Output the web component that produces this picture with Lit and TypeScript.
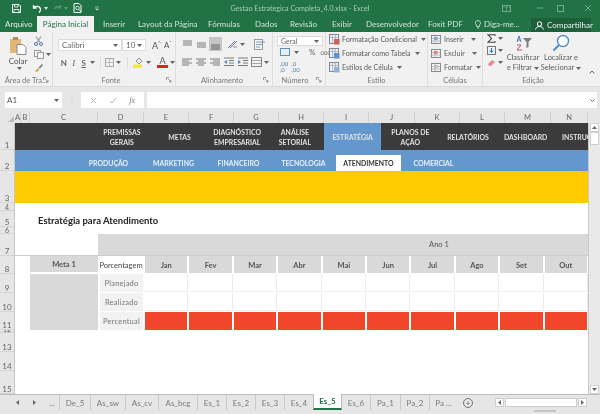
import { LitElement, css, html, svg } from 'lit';
import { customElement } from 'lit/decorators.js';

const caret = html`<svg class="caret" width="5" height="3" viewBox="0 0 5 3"><path d="M0 0h5L2.5 3z" fill="#666"/></svg>`;
const icon = (w: number, h: number, body: unknown) =>
  html`<svg width=${w} height=${h} viewBox="0 0 ${w} ${h}" fill="none">${body}</svg>`;

const lines = (ys: number[], xs: [number, number][], color = '#7a7a7a') =>
  icon(12, 12, ys.map((y, i) => svg`<path d="M${xs[i][0]} ${y}H${xs[i][1]}" stroke=${color} stroke-width="1"/>`));

const launcher = html`<svg class="launch" width="6" height="6" viewBox="0 0 6 6"><path d="M.5 3V.5H3M2 2l3 3M5 3v2H3" stroke="#777" stroke-width=".7" fill="none"/></svg>`;

const styleIcon = (accent: string) =>
  icon(11, 11, svg`<rect x=".5" y=".5" width="9" height="9" fill="#eef2f6" stroke="#7d8a96"/><path d="M.5 3.5h9M3.5.5v9M6.5.5v9" stroke="#9aa6b0" stroke-width=".7"/><rect x="5" y="5" width="5.5" height="5.5" fill=${accent}/>`);

const cellIcon = (accent: string) =>
  icon(11, 11, svg`<rect x=".5" y="1.5" width="9" height="8" fill="#f2f2f2" stroke="#8a8a8a"/><path d="M.5 4.5h9M.5 7h9M4 1.5v8" stroke="#a8a8a8" stroke-width=".7"/><rect x="3" y="3" width="3.5" height="3" fill=${accent}/>`);

const topNav = [
  ['PREMISSAS', 'GERAIS'], ['METAS'], ['DIAGNÓSTICO', 'EMPRESARIAL'], ['ANÁLISE', 'SETORIAL'],
  ['ESTRATÉGIA'], ['PLANOS DE', 'AÇÃO'], ['RELATÓRIOS'], ['DASHBOARD'], ['INSTRUÇÕES'],
];
const subNav = ['PRODUÇÃO', 'MARKETING', 'FINANCEIRO', 'TECNOLOGIA', 'ATENDIMENTO', 'COMERCIAL'];
const months = ['Jan', 'Fev', 'Mar', 'Abr', 'Mai', 'Jun', 'Jul', 'Ago', 'Set', 'Out'];
const colWidths = [6, 9, 68, 46, 45, 45, 45, 45, 45, 46, 45, 45, 46, 37];
const colNames = ['A', 'B', 'C', 'D', 'E', 'F', 'G', 'H', 'I', 'J', 'K', 'L', 'M', 'N'];
const rowLabels: [string, number][] = [
  ['1', 27], ['2', 21], ['3', 32], ['4', 8], ['5', 16], ['6', 7], ['7', 22], ['8', 18], ['9', 19],
  ['10', 19], ['11', 18], ['12', 3], ['13', 19], ['14', 19], ['15', 23],
];
// tab text boxes sit 16px apart, widths read off the reference
const ribbonTabs: [string, number][] = [
  ['Inserir', 19], ['Layout da Página', 54], ['Fórmulas', 31], ['Dados', 19],
  ['Revisão', 26], ['Exibir', 18], ['Desenvolvedor', 46], ['Foxit PDF', 30],
];
const sheetsLeft: [string, number][] = [
  ['De_5', 31], ['As_sw', 35], ['As_cv', 33], ['As_bcg', 39], ['Es_1', 29], ['Es_2', 29], ['Es_3', 29], ['Es_4', 29],
];
const sheetsRight: [string, number][] = [['Es_6', 28], ['Pa_1', 30], ['Pa_2', 29], ['Pa ...', 28]];

@customElement('app-root')
export class AppRoot extends LitElement {
  static styles = css`
    :host {
      display: block;
      width: 600px;
      height: 414px;
      overflow: hidden;
      background: #e6e6e6;
      font-family: Lato, 'Liberation Sans', sans-serif;
      font-size: 8px;
      color: #555;
      filter: blur(0.3px);
    }
    svg { display: block; flex: none; }
    .caret { margin-left: 2px; }

    /* title bar */
    .title {
      height: 16px;
      background: #217346;
      display: grid;
      grid-template-columns: 1fr 160px 1fr;
      align-items: center;
      color: #a5cdb6;
      font-size: 7.1px;
    }
    .qat { display: flex; align-items: center; gap: 5px; padding-left: 12px; }
    .title-text { text-align: center; white-space: nowrap; }
    .win { display: flex; justify-content: flex-end; align-items: center; padding-right: 9px; }
    .win svg:nth-child(1) { margin-right: 26px; }
    .win svg:nth-child(2) { margin-right: 13.5px; }
    .win svg:nth-child(3) { margin-right: 21.5px; }

    /* tabs */
    .tabs {
      height: 16px;
      background: #217346;
      display: flex;
      align-items: stretch;
      color: #cfe3d7;
      white-space: nowrap;
    }
    .tab { margin-left: 16px; line-height: 16px; text-align: center; flex: none; }
    .tab.file { margin-left: 5px; width: 24px; color: #e0eee6; }
    .tab.on {
      width: 57px;
      margin-left: 8px;
      background: #f1f1f1;
      color: #217346;
      line-height: 17px;
    }
    .tab.after { margin-left: 9px; }
    .tell { display: flex; align-items: center; gap: 3px; margin-left: 17px; width: 42px; flex: none; }
    .share {
      display: flex;
      align-items: center;
      gap: 3px;
      margin: 2px 0 0 14px;
      padding: 0 4px;
      width: 60px;
      box-sizing: border-box;
      background: #1d5f3a;
      color: #e8f2ec;
      flex: none;
    }

    /* ribbon */
    .ribbon {
      height: 54px;
      background: #f1f1f1;
      display: flex;
      border-bottom: 1px solid #dcdcdc;
    }
    .group {
      display: flex;
      flex-direction: column;
      border-right: 1px solid #dedede;
      box-sizing: border-box;
      flex: none;
    }
    .body { flex: 1; display: flex; min-height: 0; }
    .label {
      height: 10px;
      line-height: 9px;
      text-align: center;
      font-size: 7.5px;
      color: #777;
      position: relative;
      white-space: nowrap;
    }
    .launch { position: absolute; right: 3px; top: 1px; }
    .clip { width: 53px; }
    .clip .body { padding: 4px 0 0 9px; gap: 7px; }
    .paste { display: flex; flex-direction: column; align-items: center; width: 18px; color: #555; gap: 1px; line-height: 10px; }
    .clip-tools { display: flex; flex-direction: column; gap: 4px; }

    .font { width: 123px; }
    .font .body { flex-direction: column; padding: 7px 0 0 5px; gap: 6px; }
    .row { display: flex; align-items: center; }
    .combo {
      height: 12px;
      background: #fff;
      border: 1px solid #dcdcdc;
      box-sizing: border-box;
      display: flex;
      align-items: center;
      justify-content: space-between;
      padding: 0 3px;
      color: #666;
    }
    .bold { font-weight: 700; }
    .fbtn { width: 13px; text-align: center; color: #666; }

    .align { width: 97px; }
    .align .body { padding: 5px 0 0 4px; display: grid; grid-template-columns: repeat(5, 14px) 20px; grid-auto-rows: 14px; gap: 4px 0; justify-items: center; align-items: center; }
    .sel { background: #c6c6c6; width: 13px; height: 14px; display: flex; align-items: center; justify-content: center; }

    .num { width: 53px; }
    .num .body { flex-direction: column; padding: 4px 0 0 4px; }
    .num .combo { height: 10px; margin-bottom: 2px; }
    .num-tools { padding-left: 3px; gap: 2px; height: 8px; }
    .num-dec { padding-left: 3px; gap: 3px; margin-top: 5px; font-size: 6px; color: #4c7fb0; line-height: 6px; }

    .styles { width: 102px; }
    .styles .body, .cells .body { flex-direction: column; padding: 2px 0 0 3px; gap: 3px; white-space: nowrap; font-size: 7.1px; }
    .line { display: flex; align-items: center; gap: 2px; height: 11px; color: #5c5c5c; }
    .cells { width: 55px; }

    .edit { width: 117px; border-right: none; }
    .edit .body { padding: 2px 0 0 4px; }
    .sum { display: flex; flex-direction: column; gap: 3px; width: 19px; }
    .big { display: flex; flex-direction: column; align-items: center; width: 34px; flex: none; font-size: 7.4px; line-height: 10px; color: #5c5c5c; text-align: center; white-space: nowrap; }
    .big svg { margin-bottom: 1px; }
    .big .caret { margin-bottom: 0; }
    .big .txt { display: flex; flex-direction: column; align-items: center; }
    .big .t2 { display: flex; align-items: center; }
    .big.find { margin-left: 4px; }
    .collapse { flex: 1; display: flex; align-items: flex-end; justify-content: flex-end; padding: 0 5px 2px 0; }
    .edit .label { width: 100px; }

    /* formula bar */
    .fbar {
      height: 25px;
      box-sizing: border-box;
      padding: 5px 3px 4px 5px;
      display: flex;
      align-items: stretch;
    }
    .name {
      width: 57px;
      box-sizing: border-box;
      background: #fff;
      padding: 0 3px 0 2px;
      display: flex;
      align-items: center;
      justify-content: space-between;
      color: #555;
    }
    .dots { width: 19px; color: #bbb; text-align: center; line-height: 14px; }
    .fx { width: 63px; background: #fff; display: flex; align-items: center; justify-content: space-around; padding: 0 3px; box-sizing: border-box; color: #777; font-style: italic; font-family: 'Liberation Serif', serif; }
    .finput { flex: 1; background: #fff; margin-left: 3px; display: flex; align-items: center; justify-content: flex-end; padding-right: 2px; }

    /* column headers */
    .cols { height: 11px; display: flex; background: #e6e6e6; color: #666; font-size: 7.5px; line-height: 11px; }
    .corner { width: 15px; flex: none; position: relative; }
    .corner::after {
      content: '';
      position: absolute;
      right: 1px;
      bottom: 1px;
      border-style: solid;
      border-width: 0 0 6px 6px;
      border-color: transparent transparent #bbb transparent;
    }
    .col { text-align: center; border-right: 1px solid #d0d0d0; box-sizing: border-box; flex: none; }
    .col-fill { flex: 1; }

    /* sheet */
    .sheet { height: 271px; display: flex; overflow: hidden; }
    .rownums { width: 15px; flex: none; display: flex; flex-direction: column; color: #666; font-size: 8px; border-right: 1px solid #c6c6c6; box-sizing: border-box; overflow: hidden; }
    .rownum { flex: none; box-sizing: border-box; display: flex; align-items: flex-end; justify-content: center; line-height: 8px; border-bottom: 1px solid #d4d4d4; overflow: hidden; }
    .rownum.tiny { font-size: 7px; line-height: 6px; }
    .canvas { width: 573px; flex: none; background: #fff; overflow: hidden; }
    .nav-dark {
      height: 27px;
      box-sizing: border-box;
      background: #3b3b3b;
      display: grid;
      grid-template-columns: 78px repeat(9, 57.7px);
      color: #e2e2e2;
      font-weight: 700;
      font-size: 6.9px;
      line-height: 10px;
      text-align: center;
      white-space: nowrap;
    }
    .nav-dark > div { display: flex; flex-direction: column; justify-content: center; align-items: center; padding-top: 1px; }
    .nav-dark .on { background: #6397cd; }
    .nav-blue {
      height: 21px;
      background: #6397cd;
      display: grid;
      grid-template-columns: 61px repeat(6, 65px);
      align-items: end;
      color: #e8f1fa;
      font-weight: 700;
      font-size: 6.9px;
      text-align: center;
    }
    .nav-blue > div { height: 16px; display: flex; align-items: center; justify-content: center; }
    .nav-blue .on { background: #fff; color: #333; }
    .band { height: 32px; background: #ffcb00; }
    .heading { height: 31px; padding: 10px 0 0 23px; box-sizing: border-box; color: #222; font-weight: 700; font-size: 9.5px; line-height: 16px; }
    .year {
      height: 21px;
      margin-left: 83px;
      padding-left: 192px;
      background: #d9d9d9;
      text-align: center;
      line-height: 21px;
      color: #555;
      font-size: 7.5px;
    }
    .rule { height: 1px; background: #cfcfcf; }
    .table {
      display: grid;
      grid-template-columns: 15px 68px 46px repeat(10, 44.4px);
      grid-template-rows: 17px 18px 18px 18px;
      gap: 1px 0;
      font-size: 7.5px;
      color: #666;
    }
    .meta-head, .month { background: #d9d9d9; font-weight: 700; color: #555; display: flex; align-items: center; justify-content: center; box-sizing: border-box; }
    .meta-head { grid-column: 2; border-bottom: 1px solid #fff; }
    .month { border-right: 1px solid #fff; border-left: 1px solid #fff; padding-top: 2px; }
    .pct { display: flex; align-items: center; justify-content: center; color: #444; padding-top: 2px; }
    .meta-body { grid-column: 2; grid-row: 2 / span 3; background: #d9d9d9; }
    .side { grid-column: 3; background: #f2f2f2; margin: 0 1px 0 2px; padding-top: 1px; box-sizing: border-box; display: flex; align-items: center; justify-content: center; letter-spacing: .2px; color: #777; }
    .empty { border-right: 1px solid #ececec; border-bottom: 1px solid #f0f0f0; }
    .red { background: #f1462b; border-right: 1px solid #fff; border-left: 1px solid #fff; }

    .vscroll { flex: 1; background: #e9e9e9; border-left: 1px solid #c9c9c9; display: flex; flex-direction: column; justify-content: space-between; align-items: center; padding: 0 1px; box-sizing: border-box; }
    .vbtn { width: 9px; height: 9px; background: #fff; border: 1px solid #d0d0d0; box-sizing: border-box; display: flex; align-items: center; justify-content: center; }
    .thumb { width: 9px; height: 13px; background: #fff; border: 1px solid #d0d0d0; box-sizing: border-box; }
    .vtop { display: flex; flex-direction: column; }

    /* sheet tabs */
    .sheets { height: 16px; background: #e6e6e6; border-top: 1px solid #bdbdbd; display: flex; align-items: center; color: #7a7a7a; font-size: 8px; box-sizing: border-box; white-space: nowrap; }
    .arrows { display: flex; align-items: center; width: 59px; padding-left: 16px; box-sizing: border-box; gap: 14px; flex: none; }
    .sheet-tab { height: 100%; display: flex; align-items: center; justify-content: center; border-left: 1px solid #c9c9c9; box-sizing: border-box; flex: none; }
    .sheet-tab.current { width: 29px; background: #fff; color: #217346; font-weight: 700; border-left: 1px solid #bdbdbd; border-right: 1px solid #bdbdbd; border-bottom: 2px solid #217346; margin-top: -1px; height: 16px; }
    .sheet-tab.plain { border-left: none; }
    .add { margin-left: 6px; width: 10px; height: 10px; border: 1px solid #777; border-radius: 50%; box-sizing: border-box; text-align: center; line-height: 8px; font-size: 8px; color: #666; flex: none; }
    .hscroll { margin-left: 22px; width: 92px; height: 9px; display: flex; align-items: center; background: #e9e9e9; flex: none; }
    .hbtn { width: 9px; height: 9px; background: #fff; border: 1px solid #ccc; box-sizing: border-box; display: flex; align-items: center; justify-content: center; flex: none; }
    .hthumb { flex: 1; height: 9px; background: #fff; border: 1px solid #ccc; box-sizing: border-box; margin: 0 1px; }
    .status { height: 4px; background: #e6e6e6; display: flex; justify-content: flex-end; padding-right: 44px; }
    .grip { width: 22px; height: 2px; background: #c4c4c4; }
  `;

  private titleBar() {
    return html`<div class="title">
      <div class="qat">
        ${icon(9, 9, svg`<path d="M.5.5h6.5l1.500 1.500v6.500h-8z" stroke="#fff"/><path d="M2.500.5v2.500h3.500V.5M2 8.500V5.500h5v3" stroke="#fff" stroke-width=".8"/>`)}
        <span style="width:1px"></span>
        ${icon(10, 9, svg`<path d="M1.500 1v3h3M1.500 4C3 2 7.500 1.500 8.500 5c.3 1.500-.5 2.500-1.500 3.500" stroke="#fff" stroke-width="1.300"/>`)}
        <svg width="4" height="3" viewBox="0 0 4 3" style="margin-left:-3px"><path d="M0 0h4L2 3z" fill="#d7e8de"/></svg>
        ${icon(9, 9, svg`<path d="M7.500 1v3h-3M7.500 4C6 2 2.500 2 1.500 5" stroke="#5c9a78" stroke-width="1.200"/>`)}
        <svg width="4" height="3" viewBox="0 0 4 3" style="margin-left:-3px"><path d="M0 0h4L2 3z" fill="#5c9a78"/></svg>
        ${icon(9, 10, svg`<path d="M1 .5h5l2 2v7H1z" stroke="#fff"/><circle cx="4.500" cy="5" r="1.800" stroke="#fff" stroke-width=".8"/><path d="M6 6.500l2 2" stroke="#fff"/>`)}
        <svg width="5" height="5" viewBox="0 0 5 5" style="margin-left:8px"><path d="M0 0h4M0 2h4" stroke="#d7e8de" stroke-width=".6"/><path d="M.500 3h3L2 4.500z" fill="#d7e8de"/></svg>
      </div>
      <div class="title-text">Gestao Estrategica Completa_4.0.xlsx - Excel</div>
      <div class="win">
        ${icon(9, 7, svg`<rect x=".5" y=".5" width="8" height="6" stroke="#74a98b"/><path d="M.5 2h8M4.500 2v4.500" stroke="#74a98b" stroke-width=".7"/>`)}
        ${icon(6, 2, svg`<path d="M0 1h6" stroke="#74a98b"/>`)}
        ${icon(7, 7, svg`<rect x=".5" y=".5" width="6" height="6" stroke="#74a98b"/>`)}
        ${icon(6, 6, svg`<path d="M0 0l6 6M6 0L0 6" stroke="#74a98b"/>`)}
      </div>
    </div>`;
  }

  private tabsBar() {
    return html`<div class="tabs">
      <div class="tab file">Arquivo</div>
      <div class="tab on">Página Inicial</div>
      ${ribbonTabs.map(([t, w], i) => html`<div class="tab ${i === 0 ? 'after' : ''}" style="width:${w}px">${t}</div>`)}
      <div class="tell">
        ${icon(6, 9, svg`<path d="M3 .5a2.500 2.500 0 0 1 1.500 4.500v1.500h-3V5A2.500 2.500 0 0 1 3 .5zM2 8h2" stroke="#dcebe2" stroke-width=".8"/>`)}
        <span>Diga-me...</span>
      </div>
      <div class="share">
        ${icon(9, 9, svg`<circle cx="4.500" cy="3" r="2.200" stroke="#fff"/><path d="M.5 8.500c.5-2 2-3 4-3s3.500 1 4 3" stroke="#fff"/>`)}
        <span>Compartilhar</span>
      </div>
    </div>`;
  }

  private ribbon() {
    return html`<div class="ribbon">
      <div class="group clip">
        <div class="body">
          <div class="paste">
            ${icon(18, 19, svg`<rect x="1" y="3" width="11" height="14" fill="#e3b778"/><rect x="4" y="1" width="5" height="3" fill="#a98d63"/><path d="M8 8.500h6l3 3v7H8z" fill="#fff" stroke="#8a8a8a"/>`)}
            <span>Colar</span>
            ${caret}
          </div>
          <div class="clip-tools">
            ${icon(9, 10, svg`<path d="M2 .5l4 6M7 .5l-4 6" stroke="#6d8296"/><circle cx="2" cy="8" r="1.500" stroke="#4e7ca5"/><circle cx="7" cy="8" r="1.500" stroke="#4e7ca5"/>`)}
            <div class="row">${icon(10, 9, svg`<rect x=".5" y=".5" width="6" height="6" fill="#f5f5f5" stroke="#9a9a9a"/><rect x="3.500" y="2.500" width="6" height="6" fill="#f5f5f5" stroke="#9a9a9a"/>`)}${caret}</div>
            ${icon(9, 9, svg`<path d="M1 8l3-3 1.500 1.500L3 9z" fill="#d9a441"/><path d="M4.500 4.500L8 1l1 1-3 3.500z" fill="#777"/>`)}
          </div>
        </div>
        <div class="label">Área de Tra... ${launcher}</div>
      </div>

      <div class="group font">
        <div class="body">
          <div class="row">
            <div class="combo" style="width:64px"><span>Calibri</span>${caret}</div>
            <div class="combo" style="width:24px"><span>10</span>${caret}</div>
            <span style="margin-left:6px;font-size:9px;color:#555">A</span><span style="font-size:5px;color:#3f7fc0;margin-bottom:5px">^</span>
            <span style="margin-left:3px;font-size:8px;color:#555">A</span><span style="font-size:5px;color:#3f7fc0;margin-bottom:5px">ˇ</span>
          </div>
          <div class="row">
            <span class="fbtn bold" style="margin-left:1px">N</span>
            <span class="fbtn" style="font-style:italic;font-family:'Liberation Serif',serif;font-size:9px">I</span>
            <span class="fbtn bold" style="text-decoration:underline">S</span>
            ${caret}
            <span style="width:1px;height:11px;background:#ddd;margin:0 4px 0 5px"></span>
            ${icon(9, 9, svg`<rect x=".5" y=".5" width="8" height="8" stroke="#aaa"/><path d="M4.500 .5v8M.5 4.500h8" stroke="#aaa" stroke-width=".7"/>`)}
            ${caret}
            <span style="width:1px;height:11px;background:#ddd;margin:0 5px 0 6px"></span>
            ${icon(11, 11, svg`<path d="M3 4l3-3 3 3-3 3z" fill="#eee" stroke="#777" stroke-width=".8"/><rect x="0" y="7.500" width="9" height="3.500" fill="#f3ee2d"/>`)}
            ${caret}
            <span style="margin-left:6px;width:11px;display:flex;flex-direction:column;align-items:center;font-size:9px;line-height:8px;color:#555">A<span style="width:11px;height:3px;background:#e0211d"></span></span>
            ${caret}
          </div>
        </div>
        <div class="label" style="padding-right:6px">Fonte ${launcher}</div>
      </div>

      <div class="group align">
        <div class="body">
          ${lines([3, 5, 7], [[2, 11], [2, 11], [2, 11]])}
          ${lines([5, 7, 9], [[2, 11], [2, 11], [2, 11]])}
          <div class="sel">${lines([7, 9, 11], [[2, 11], [2, 11], [2, 11]], '#666')}</div>
          <div class="row" style="grid-column:span 2">${icon(11, 10, svg`<path d="M1 9l7-7M3 9l7-7" stroke="#6a7f96"/><path d="M6 8h4" stroke="#c07f7f"/>`)}${caret}</div>
          ${icon(12, 11, svg`<rect x=".5" y=".5" width="8" height="10" fill="#f5f5f5" stroke="#999"/><path d="M2 3h9M2 5.500h6M2 8h4" stroke="#5b8bb8" stroke-width=".8"/>`)}
          ${lines([3, 5, 7, 9], [[1, 11], [1, 8], [1, 11], [1, 8]])}
          ${lines([3, 5, 7, 9], [[1, 11], [3, 9], [1, 11], [3, 9]])}
          ${lines([3, 5, 7, 9], [[1, 11], [4, 11], [1, 11], [4, 11]])}
          ${icon(12, 10, svg`<path d="M1 1h10M6 3.500h5M6 6h5M1 8.500h10" stroke="#7a7a7a"/><path d="M1 5l3-2v4z" fill="#4e86bd"/>`)}
          ${icon(12, 10, svg`<path d="M1 1h10M6 3.500h5M6 6h5M1 8.500h10" stroke="#7a7a7a"/><path d="M4 5L1 3v4z" fill="#4e86bd"/>`)}
          <div class="row">${icon(11, 10, svg`<rect x=".5" y=".5" width="10" height="9" stroke="#888"/><path d="M.5 3.500h10M.5 6.500h10" stroke="#888" stroke-width=".7"/>`)}${caret}</div>
        </div>
        <div class="label" style="padding-right:4px">Alinhamento ${launcher}</div>
      </div>

      <div class="group num">
        <div class="body">
          <div class="combo" style="width:46px"><span style="font-size:7px">Geral</span>${caret}</div>
          <div class="row num-tools">${icon(10, 8, svg`<rect x=".5" y=".5" width="9" height="7" fill="#e3eef8" stroke="#5d8fc0"/>`)}${caret}<span style="margin-left:8px;color:#666">%</span><span style="margin-left:3px;font-size:6px;color:#666">000</span></div>
          <div class="row num-dec"><span>,00<br />,0</span><span>,0<br />,00</span></div>
        </div>
        <div class="label" style="padding-right:8px">Número ${launcher}</div>
      </div>

      <div class="group styles">
        <div class="body">
          <div class="line">${styleIcon('#c9625c')}<span>Formatação Condicional</span>${caret}</div>
          <div class="line">${styleIcon('#5d93c9')}<span>Formatar como Tabela</span>${caret}</div>
          <div class="line">${styleIcon('#8fb4d8')}<span>Estilos de Célula</span>${caret}</div>
        </div>
        <div class="label">Estilo</div>
      </div>

      <div class="group cells">
        <div class="body">
          <div class="line">${cellIcon('#7aa9d6')}<span>Inserir</span><span style="margin-left:3px">${caret}</span></div>
          <div class="line">${cellIcon('#d98a7c')}<span>Excluir</span><span style="margin-left:3px">${caret}</span></div>
          <div class="line">${cellIcon('#bcbcbc')}<span>Formatar</span>${caret}</div>
        </div>
        <div class="label">Células</div>
      </div>

      <div class="group edit">
        <div class="body">
          <div class="sum">
            <div class="row">${icon(9, 9, svg`<path d="M8 2V.7H1l3.500 3.800L1 8.300h7V7" stroke="#444" stroke-width="1.100"/>`)}${caret}</div>
            <div class="row">${icon(9, 9, svg`<rect x=".5" y=".5" width="8" height="8" fill="#eaf1f8" stroke="#777"/><path d="M4.500 2v4M2.800 4.500l1.700 2 1.700-2" stroke="#2f6ea8"/>`)}${caret}</div>
            <div class="row">${icon(9, 9, svg`<path d="M1 6l4-4 3 2-4 4H2z" fill="#e58a96"/>`)}${caret}</div>
          </div>
          <div class="big">
            ${icon(18, 18, svg`<path d="M8 16H3l4-5H3" stroke="#b5536b"/><path d="M3 8l2-6 2 6M3.800 6h2.400" stroke="#3f7fc0"/><path d="M9 4h9l-3.500 4v5l-2 1V8z" fill="#7d7d7d"/>`)}
            <div class="txt"><span>Classificar</span><span class="t2">e Filtrar${caret}</span></div>
          </div>
          <div class="big find">
            ${icon(18, 18, svg`<circle cx="11" cy="7" r="5.500" stroke="#4f8dc7" stroke-width="1.400" fill="#fff"/><path d="M7 11l-5.500 5.500" stroke="#4f8dc7" stroke-width="2"/>`)}
            <div class="txt"><span>Localizar e</span><span class="t2">Selecionar${caret}</span></div>
          </div>
          <div class="collapse">
            <svg width="6" height="4" viewBox="0 0 6 4"><path d="M.5 3.500L3 1l2.500 2.500" stroke="#666" fill="none"/></svg>
          </div>
        </div>
        <div class="label">Edição</div>
      </div>
    </div>`;
  }

  private formulaBar() {
    return html`<div class="fbar">
      <div class="name"><span>A1</span>${caret}</div>
      <div class="dots">⋮</div>
      <div class="fx">
        ${icon(7, 7, svg`<path d="M1 1l5 5M6 1L1 6" stroke="#b5b5b5"/>`)}
        ${icon(8, 7, svg`<path d="M1 4l2 2 4-5" stroke="#b5b5b5"/>`)}
        <span>fx</span>
      </div>
      <div class="finput">
        <svg width="5" height="3" viewBox="0 0 5 3"><path d="M.5.5L2.500 2.500 4.500.5" stroke="#666" fill="none"/></svg>
      </div>
    </div>`;
  }

  private sheet() {
    return html`<div class="sheet">
      <div class="rownums">
        ${rowLabels.map(([n, h]) => html`<div class="rownum ${h < 9 ? 'tiny' : ''}" style="height:${h}px">${n}</div>`)}
      </div>
      <div class="canvas">
        <div class="nav-dark">
          <span></span>
          ${topNav.map((item, i) => html`<div class=${i === 4 ? 'on' : ''}>${item.map(t => html`<span>${t}</span>`)}</div>`)}
        </div>
        <div class="nav-blue">
          <span></span>
          ${subNav.map((t, i) => html`<div class=${i === 4 ? 'on' : ''}>${t}</div>`)}
        </div>
        <div class="band"></div>
        <div class="heading">Estratégia para Atendimento</div>
        <div class="year">Ano 1</div>
        <div class="rule"></div>
        <div class="table">
          <div class="meta-head">Meta 1</div>
          <div class="pct">Porcentagem</div>
          ${months.map(m => html`<div class="month">${m}</div>`)}
          <div class="meta-body"></div>
          ${['Planejado', 'Realizado'].map(l => html`
            <div class="side">${l}</div>
            ${months.map(() => html`<div class="empty"></div>`)}
          `)}
          <div class="side">Percentual</div>
          ${months.map(() => html`<div class="red"></div>`)}
        </div>
      </div>
      <div class="vscroll">
        <div class="vtop">
          <div class="vbtn"><svg width="5" height="3" viewBox="0 0 5 3"><path d="M0 3h5L2.500 0z" fill="#666"/></svg></div>
          <div class="thumb"></div>
        </div>
        <div class="vbtn"><svg width="5" height="3" viewBox="0 0 5 3"><path d="M0 0h5L2.500 3z" fill="#666"/></svg></div>
      </div>
    </div>`;
  }

  private sheetTabs() {
    return html`<div class="sheets">
      <div class="arrows">
        <svg width="3" height="5" viewBox="0 0 3 5"><path d="M3 0v5L0 2.500z" fill="#666"/></svg>
        <svg width="3" height="5" viewBox="0 0 3 5"><path d="M0 0v5l3-2.500z" fill="#666"/></svg>
        <span style="margin-left:-1px">...</span>
      </div>
      ${sheetsLeft.map(([s, w]) => html`<div class="sheet-tab" style="width:${w}px">${s}</div>`)}
      <div class="sheet-tab current">Es_5</div>
      ${sheetsRight.map(([s, w], i) => html`<div class="sheet-tab ${i === 0 ? 'plain' : ''}" style="width:${w}px">${s}</div>`)}
      <div class="add">+</div>
      <div class="hscroll">
        <div class="hbtn"><svg width="3" height="5" viewBox="0 0 3 5"><path d="M3 0v5L0 2.500z" fill="#666"/></svg></div>
        <div class="hthumb"></div>
        <div class="hbtn"><svg width="3" height="5" viewBox="0 0 3 5"><path d="M0 0v5l3-2.500z" fill="#666"/></svg></div>
      </div>
    </div>`;
  }

  render() {
    return html`
      ${this.titleBar()}
      ${this.tabsBar()}
      ${this.ribbon()}
      ${this.formulaBar()}
      <div class="cols">
        <div class="corner"></div>
        ${colNames.map((c, i) => html`<div class="col" style="width:${colWidths[i]}px">${c}</div>`)}
        <div class="col-fill"></div>
      </div>
      ${this.sheet()}
      ${this.sheetTabs()}
      <div class="status"><div class="grip"></div></div>
    `;
  }
}

declare global {
  interface HTMLElementTagNameMap {
    'app-root': AppRoot;
  }
}
